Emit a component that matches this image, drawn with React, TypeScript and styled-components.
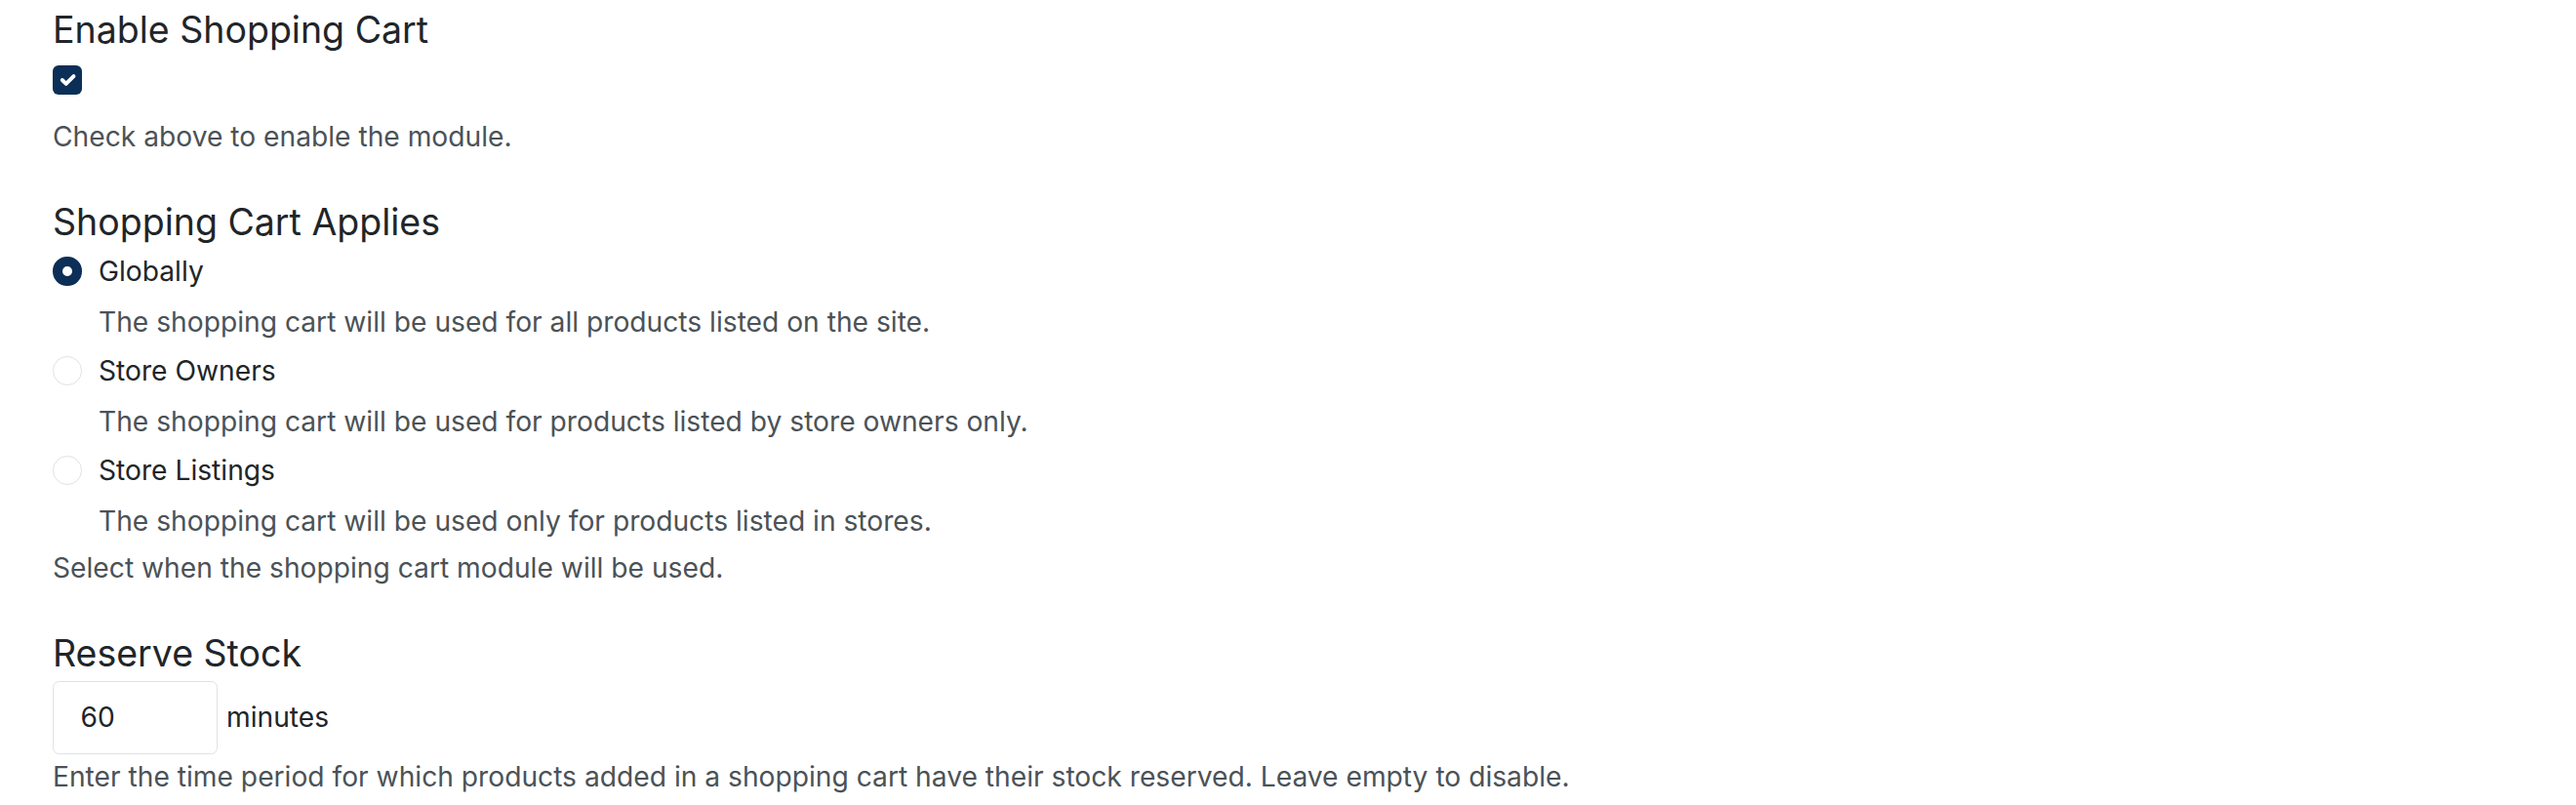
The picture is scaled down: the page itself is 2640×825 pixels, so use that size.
import React from "react";
import styled, { createGlobalStyle } from "styled-components";

const GlobalStyle = createGlobalStyle`
  html, body {
    margin: 0;
    padding: 0;
    background: #ffffff;
  }
  body {
    font-family: Inter, "Noto Sans", "Liberation Sans", sans-serif;
    font-size: 28.2px;
    line-height: 42.3px;
    color: #212529;
  }
  * {
    box-sizing: border-box;
  }
`;

const Page = styled.div`
  padding: 8px 54px 0;
  display: flex;
  flex-direction: column;
  gap: 44px;
`;

const Field = styled.section`
  display: flex;
  flex-direction: column;
`;

const FieldTitle = styled.h4`
  margin: 0;
  font-size: 37.5px;
  line-height: 45px;
  font-weight: 400;
  color: #212529;
`;

const CheckRow = styled.label`
  display: flex;
  align-items: center;
  height: 42.3px;
  margin-top: 8px;
`;

const CheckBox = styled.span`
  width: 29.5px;
  height: 29.5px;
  border-radius: 6px;
  background: #0b2f56;
  display: flex;
  align-items: center;
  justify-content: center;
`;

const Help = styled.div<{ $gap?: number }>`
  margin-top: ${(p) => p.$gap ?? 0}px;
  color: #4b5257;
  line-height: 42.3px;
`;

const RadioList = styled.div`
  display: flex;
  flex-direction: column;
  gap: 8px;
  margin-top: 7px;
`;

const RadioItem = styled.div`
  display: flex;
  flex-direction: column;
  gap: 9.5px;
`;

const RadioRow = styled.label`
  display: flex;
  align-items: center;
  gap: 17.5px;
  height: 42.3px;
  color: #212529;
`;

const RadioDot = styled.span<{ $checked?: boolean }>`
  width: 29.5px;
  height: 29.5px;
  border-radius: 50%;
  flex-shrink: 0;
  background: #ffffff;
  border: ${(p) => (p.$checked ? "10px solid #0b2f56" : "1.6px solid #dee2e6")};
`;

const RadioDesc = styled.div`
  padding-left: 47px;
  color: #4b5257;
  line-height: 42.3px;
`;

const InputRow = styled.div`
  display: flex;
  align-items: center;
  gap: 9.5px;
  margin-top: 5.8px;
`;

const NumberBox = styled.div`
  width: 168.5px;
  height: 75px;
  border: 1.6px solid #dee2e6;
  border-radius: 6.4px;
  padding: 0 0 0 27.5px;
  display: flex;
  align-items: center;
  color: #212529;
`;

const Unit = styled.span`
  color: #212529;
`;

const options = [
  {
    label: "Globally",
    desc: "The shopping cart will be used for all products listed on the site.",
    checked: true,
  },
  {
    label: "Store Owners",
    desc: "The shopping cart will be used for products listed by store owners only.",
    checked: false,
  },
  {
    label: "Store Listings",
    desc: "The shopping cart will be used only for products listed in stores.",
    checked: false,
  },
];

export default function App() {
  return (
    <>
      <GlobalStyle />
      <Page>
        <Field>
          <FieldTitle>Enable Shopping Cart</FieldTitle>
          <CheckRow>
            <CheckBox>
              <svg width="26" height="26" viewBox="0 0 20 20">
                <path
                  d="m6 10 3 3 6-6"
                  fill="none"
                  stroke="#fff"
                  strokeWidth="3"
                  strokeLinecap="round"
                  strokeLinejoin="round"
                />
              </svg>
            </CheckBox>
          </CheckRow>
          <Help $gap={15.3}>Check above to enable the module.</Help>
        </Field>

        <Field>
          <FieldTitle>Shopping Cart Applies</FieldTitle>
          <RadioList>
            {options.map((o) => (
              <RadioItem key={o.label}>
                <RadioRow>
                  <RadioDot $checked={o.checked} />
                  {o.label}
                </RadioRow>
                <RadioDesc>{o.desc}</RadioDesc>
              </RadioItem>
            ))}
          </RadioList>
          <Help $gap={5.5}>Select when the shopping cart module will be used.</Help>
        </Field>

        <Field>
          <FieldTitle>Reserve Stock</FieldTitle>
          <InputRow>
            <NumberBox>60</NumberBox>
            <Unit>minutes</Unit>
          </InputRow>
          <Help $gap={1.8}>
            Enter the time period for which products added in a shopping cart have their stock
            reserved. Leave empty to disable.
          </Help>
        </Field>
      </Page>
    </>
  );
}
